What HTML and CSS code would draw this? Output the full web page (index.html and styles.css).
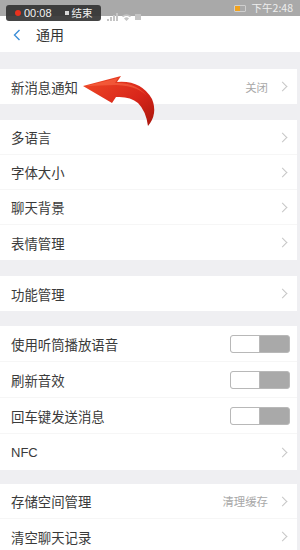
FILE: index.html
```html
<!DOCTYPE html>
<html lang="zh">
<head>
<meta charset="utf-8">
<link rel="stylesheet" href="styles.css">
</head>
<body>
<div class="screen">
  <div class="statusbar">
    <div class="rec"><span class="dot"></span><span class="time">00:08</span><span class="sq"></span><span class="end">结束</span></div>
    <div class="sys-left">
      <svg width="34" height="11" viewBox="0 0 34 11"><path d="M0 10h2V8H0zM3 10h2V6H3zM6 10h2V4H6zM9 10h2V2H9z" fill="#c4c4c4"/><path d="M15 5a7 7 0 0 1 9 0l-1 1.2a5.3 5.3 0 0 0-7 0zM17 7.4a3.6 3.6 0 0 1 5 0L19.5 10z" fill="#c4c4c4"/><rect x="28" y="3" width="6" height="6" fill="#c4c4c4"/></svg>
    </div>
    <div class="sys-right">
      <span class="batt"><span class="batt-fill"></span></span>
      <span class="clock">下午2:48</span>
    </div>
  </div>
  <div class="header">
    <svg class="back" width="8" height="12" viewBox="0 0 8 12"><path d="M6.5 1L1.5 6l5 5" fill="none" stroke="#3b8ed8" stroke-width="1.4"/></svg>
    <span class="title">通用</span>
  </div>
  <div class="content">
    <div class="group g-first">
      <div class="row"><span class="label">新消息通知</span><span class="value">关闭</span><span class="chev"></span></div>
    </div>
    <div class="group">
      <div class="row"><span class="label">多语言</span><span class="chev"></span></div>
      <div class="row"><span class="label">字体大小</span><span class="chev"></span></div>
      <div class="row"><span class="label">聊天背景</span><span class="chev"></span></div>
      <div class="row"><span class="label">表情管理</span><span class="chev"></span></div>
    </div>
    <div class="group">
      <div class="row"><span class="label">功能管理</span><span class="chev"></span></div>
    </div>
    <div class="group g-tall">
      <div class="row"><span class="label">使用听筒播放语音</span><span class="toggle"><span class="knob"></span></span></div>
      <div class="row"><span class="label">刷新音效</span><span class="toggle"><span class="knob"></span></span></div>
      <div class="row"><span class="label">回车键发送消息</span><span class="toggle"><span class="knob"></span></span></div>
      <div class="row"><span class="label nfc">NFC</span><span class="chev"></span></div>
    </div>
    <div class="group g-last">
      <div class="row"><span class="label">存储空间管理</span><span class="value">清理缓存</span><span class="chev"></span></div>
      <div class="row"><span class="label">清空聊天记录</span><span class="chev"></span></div>
    </div>
  </div>
  <svg class="arrow" width="90" height="60" viewBox="78 70 90 60">
    <defs>
      <linearGradient id="ag" x1="0" y1="0" x2="1" y2="1">
        <stop offset="0" stop-color="#f04a26"/>
        <stop offset="0.6" stop-color="#d8261a"/>
        <stop offset="1" stop-color="#a8150c"/>
      </linearGradient>
    </defs>
    <path d="M83 86 L121 76 L117 82 Q141 80 152 99 Q158 114 148 126 Q146 111 138 103 Q130 96 116 97 L112 103 Z" fill="url(#ag)"/>
    <path d="M86 86 L118 78 L115 83 Q138 82 149 99 Q141 86 116 85 Z" fill="#ff7a55" opacity="0.45"/>
  </svg>
</div>
</body>
</html>
```
FILE: styles.css
```css
* { box-sizing: border-box; margin: 0; padding: 0; }
html, body { width: 300px; height: 550px; overflow: hidden; }
body {
  font-family: "Noto Sans CJK SC", "Noto Sans", "Liberation Sans", sans-serif;
  background: #efeff2;
}
.screen { position: relative; width: 300px; height: 550px; overflow: hidden; }
.statusbar {
  height: 16px;
  background: #a9a9a9;
  display: flex;
  align-items: flex-start;
  position: relative;
  z-index: 2;
}
.rec {
  margin: 5px 0 0 6px;
  height: 16px;
  width: 95px;
  flex: none;
  background: rgba(52, 52, 52, 0.92);
  border-radius: 3px;
  display: flex;
  align-items: center;
  padding-left: 18px;
  color: #f2f2f2;
  font-size: 11px;
  line-height: 16px;
  white-space: nowrap;
  position: relative;
}
.rec .dot {
  position: absolute;
  left: 9px; top: 5px;
  width: 6px; height: 6px; border-radius: 50%;
  background: #e8321e;
}
.rec .time { font-family: "Liberation Sans", sans-serif; font-size: 11px; }
.rec .sq { width: 4px; height: 4px; background: #d8d8d8; margin: 0 3px 0 13px; flex: none; }
.rec .end { font-size: 10.5px; }
.sys-left { margin: 3px 0 0 6px; }
.sys-right {
  margin-left: auto;
  margin-right: 7px;
  display: flex;
  align-items: center;
  height: 16px;
  gap: 6px;
}
.batt {
  width: 12px; height: 7px;
  border: 1px solid #cfcfcf;
  border-radius: 1px;
  position: relative;
}
.batt-fill { position: absolute; left: 0; top: 0; bottom: 0; width: 5px; background: #f0a21e; }
.clock { color: #eeeeee; font-size: 10.5px; line-height: 16px; white-space: nowrap; }
.header {
  height: 36px;
  background: #ffffff;
  display: flex;
  align-items: center;
  padding-left: 13px;
}
.back { margin-top: 1px; }
.title { margin-left: 15px; font-size: 14px; color: #333; }
.content { padding-right: 3px; }
.group { background: #fff; margin-top: 16px; }
.g-first { margin-top: 17px; }
.row {
  height: 35px;
  display: flex;
  align-items: center;
  padding-left: 11px;
  padding-right: 7px;
  border-bottom: 1px solid #f6f6f6;
}
.row:last-child { border-bottom: none; }
.g-tall .row { height: 36px; }
.g-tall { margin-top: 15px; }
.g-last { margin-top: 14px; }
.label { font-size: 13.4px; color: #3a3a3a; flex: 1; white-space: nowrap; }
.label.nfc { font-family: "Liberation Sans", sans-serif; font-size: 13px; }
.value { font-size: 11.4px; color: #a8a8a8; margin-right: 11px; }
.chev {
  width: 7px; height: 7px;
  border-top: 1.2px solid #c6c6c6;
  border-right: 1.2px solid #c6c6c6;
  transform: rotate(45deg);
  margin-right: 4px;
}
.toggle {
  width: 60px; height: 18px;
  border: 1px solid #b8b8b8;
  border-radius: 3px;
  background: #a9a9a9;
  display: flex;
  overflow: hidden;
}
.knob { width: 29px; height: 100%; background: #fff; border-right: 1px solid #b8b8b8; }
.arrow { position: absolute; left: 78px; top: 70px; }
```
